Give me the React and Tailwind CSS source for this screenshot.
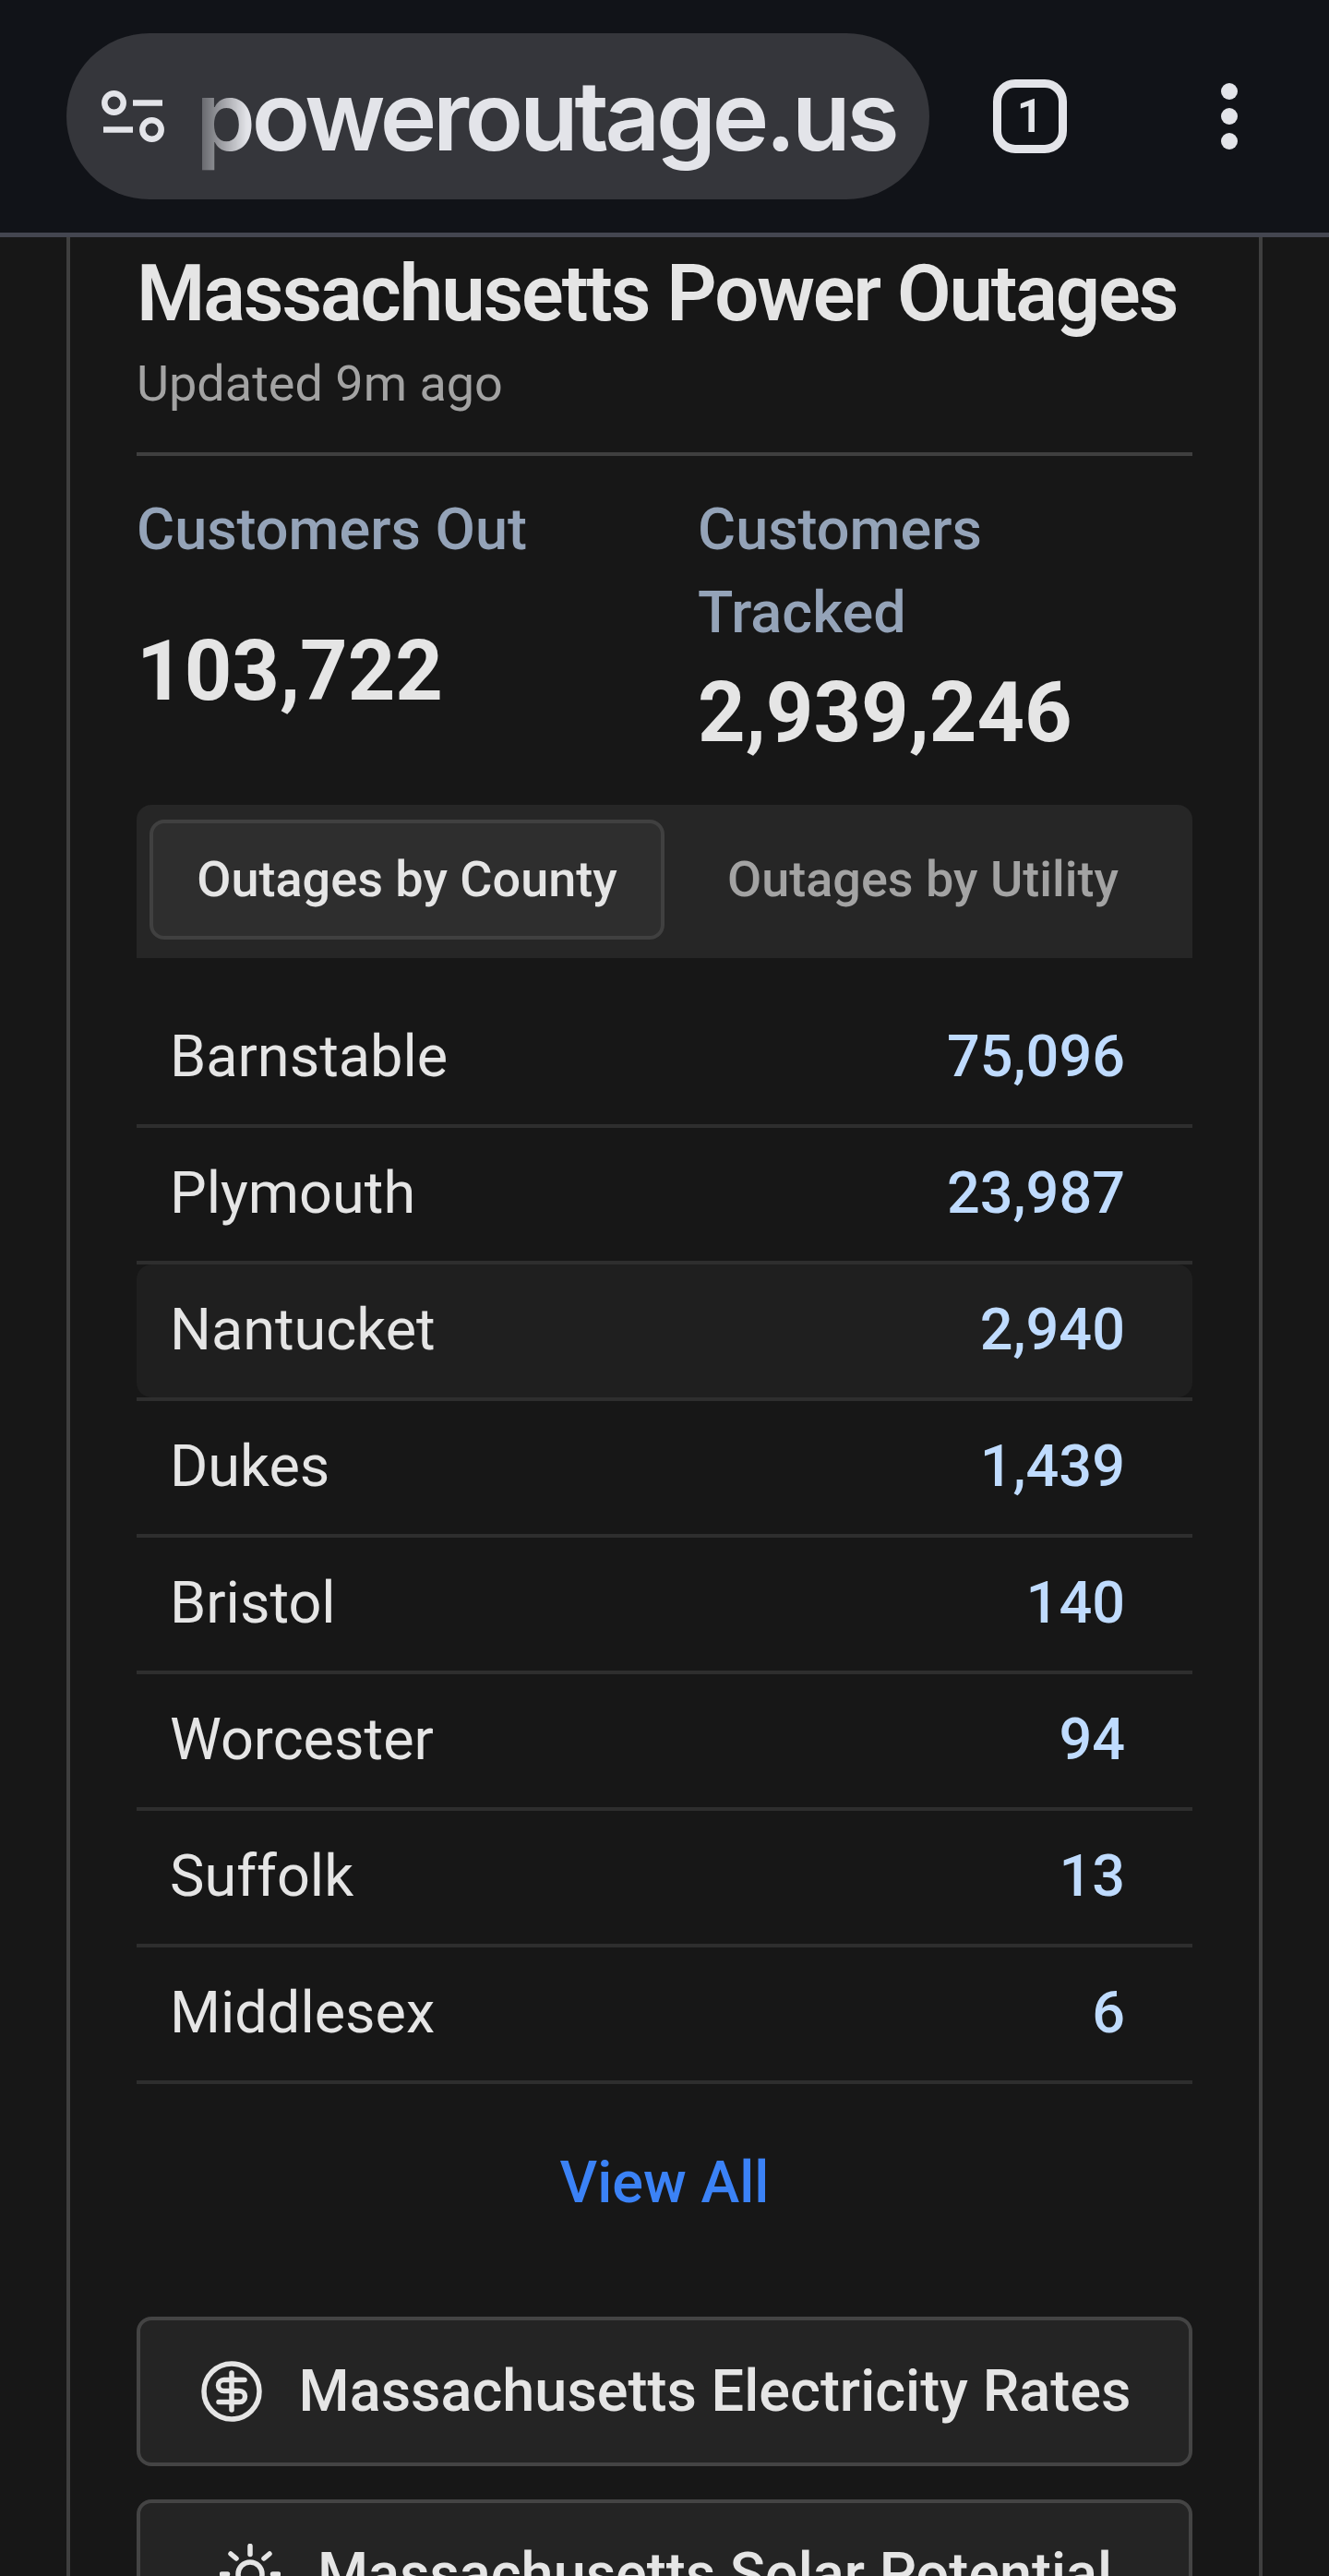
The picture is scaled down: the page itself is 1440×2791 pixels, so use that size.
const counties = [
  ["Barnstable", "75,096"],
  ["Plymouth", "23,987"],
  ["Nantucket", "2,940"],
  ["Dukes", "1,439"],
  ["Bristol", "140"],
  ["Worcester", "94"],
  ["Suffolk", "13"],
  ["Middlesex", "6"],
];

const SiteIcon = () => (
  <svg width="68" height="56" viewBox="0 0 68 56" fill="none" stroke="#e3e4e9" strokeWidth="6.500" className="shrink-0">
    <circle cx="13.500" cy="13.500" r="10.200" />
    <path d="M34 13.500h32" />
    <path d="M2 42.500h32" />
    <circle cx="54.500" cy="42.500" r="10.200" />
  </svg>
);

const DollarIcon = () => (
  <svg width="66" height="66" viewBox="0 0 66 66" fill="none" stroke="#e5e5e5" strokeWidth="5.500" strokeLinecap="round" className="shrink-0">
    <circle cx="33" cy="33" r="30" />
    <path d="M33 13v40" />
    <path d="M47 20.500H24.500a6 6 0 0 0 0 12h17a6 6 0 0 1 0 12H19" />
  </svg>
);

const SunIcon = () => (
  <svg width="66" height="66" viewBox="0 0 66 66" fill="none" stroke="#e5e5e5" strokeWidth="5.500" strokeLinecap="round" className="shrink-0">
    <circle cx="33" cy="33" r="13" />
    <path d="M33 2.500v9M12 11l6 5M54 11l-6 5M2.500 33h6M57.500 33h6" />
  </svg>
);

export default function App() {
  return (
    <div className="h-[2791px] overflow-hidden bg-[#171717] font-['Roboto',sans-serif]">
      {/* browser bar */}
      <div className="h-[257px] border-b-[5px] border-[#444650] bg-[#111318] pl-[72px] pt-[36px] flex items-start">
        <div className="w-[935px] h-[180px] rounded-full bg-[#35363b] flex items-center pl-[38px] overflow-hidden">
          <SiteIcon />
          <span className="ml-[34px] text-[104px] font-semibold text-[#e3e4e9] font-['Inter',sans-serif] tracking-[-4.200px] leading-[1.4] whitespace-nowrap [mask-image:linear-gradient(90deg,rgba(0,0,0,0.2),black_56px)]">
            poweroutage.us
          </span>
        </div>
        <div className="ml-[69px] mt-[50px] w-[80px] h-[80px] rounded-[24px] border-[9px] border-[#e3e4e9] flex items-center justify-center text-[#e3e4e9] text-[50px] font-semibold">
          1
        </div>
        <div className="ml-[167px] mt-[54px] flex flex-col gap-[9px]">
          <span className="w-[18px] h-[18px] rounded-full bg-[#e3e4e9]"></span>
          <span className="w-[18px] h-[18px] rounded-full bg-[#e3e4e9]"></span>
          <span className="w-[18px] h-[18px] rounded-full bg-[#e3e4e9]"></span>
        </div>
      </div>

      {/* card */}
      <div className="mx-[72px] h-full border-x-[4px] border-[#3f3f3f] px-[72px] text-[#e5e5e5]">
        <h1 className="pt-[16px] text-[85px] leading-[90px] tracking-[-2.100px] font-semibold whitespace-nowrap">
          Massachusetts Power Outages
        </h1>
        <p className="mt-[18px] text-[54px] leading-[70px] text-[#a3a3a3]">Updated 9m ago</p>

        <div className="mt-[39px] h-[4px] bg-[#3f3f3f]"></div>

        <div className="mt-[35px] grid grid-cols-2 gap-x-[72px]">
          <div className="flex flex-col">
            <div className="text-[63px] leading-[90px] font-medium text-[#94a3b8]">Customers Out</div>
            <div className="flex-1 flex items-center text-[90px] leading-[128px] font-bold">103,722</div>
          </div>
          <div>
            <div className="text-[63px] leading-[90px] font-medium text-[#94a3b8]">Customers Tracked</div>
            <div className="text-[90px] leading-[128px] font-bold">2,939,246</div>
          </div>
        </div>

        {/* tabs */}
        <div className="mt-[35px] h-[166px] rounded-t-[16px] bg-[#262626] pl-[14px] pr-[12px] pt-[16px] flex">
          <div className="w-[558px] h-[130px] pb-[2px] rounded-[16px] border-[4px] border-[#404040] bg-[#2e2e2e] flex items-center justify-center text-[54px] font-medium">
            Outages by County
          </div>
          <div className="flex-1 h-[130px] pb-[2px] flex items-center justify-center text-[54px] font-medium text-[#a3a3a3]">
            Outages by Utility
          </div>
        </div>

        {/* county rows */}
        <div className="mt-[36px]">
          {counties.map(([name, count]) => (
            <div key={name} className="h-[148px] border-b-[4px] border-[#2e2e2e]">
              <div
                className={
                  name === "Nantucket"
                    ? "h-full pl-[36px] pr-[73px] pb-[2px] flex items-center justify-between bg-[#1f1f1f] rounded-[16px]"
                    : "h-full pl-[36px] pr-[73px] pb-[2px] flex items-center justify-between"
                }
              >
                <span className="text-[63px]">{name}</span>
                <span className="text-[63px] font-medium text-[#bfdbfe]">{count}</span>
              </div>
            </div>
          ))}
        </div>

        <div className="mt-[62px] text-center text-[63px] leading-[90px] font-medium text-[#3b82f6]">View All</div>

        <div className="mt-[100px] flex flex-col gap-[36px]">
          <div className="h-[162px] pl-[3px] rounded-[16px] border-[4px] border-[#444444] bg-[#242424] flex items-center justify-center gap-[40px] text-[63px] font-medium whitespace-nowrap">
            <DollarIcon />
            Massachusetts Electricity Rates
          </div>
          <div className="h-[162px] pl-[3px] rounded-[16px] border-[4px] border-[#444444] bg-[#242424] flex items-center justify-center gap-[40px] text-[63px] font-medium whitespace-nowrap">
            <SunIcon />
            Massachusetts Solar Potential
          </div>
        </div>
      </div>
    </div>
  );
}
